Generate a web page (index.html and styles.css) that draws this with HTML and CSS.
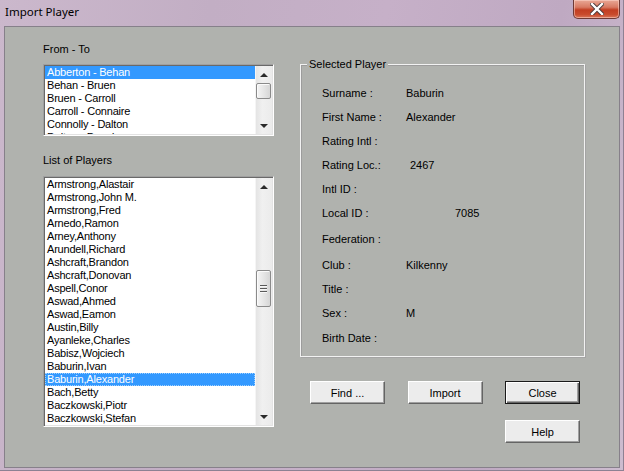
FILE: index.html
```html
<!DOCTYPE html>
<html>
<head>
<meta charset="utf-8">
<link rel="stylesheet" href="styles.css">
</head>
<body>
<div class="window">
  <div class="titlebar">
    <span class="title">Import Player</span>
    <span class="close-btn">
      <svg width="14" height="12" viewBox="0 0 14 12"><path d="M2 1 L12 11 M12 1 L2 11" stroke="#4a3a3a" stroke-width="4.2" stroke-linecap="square"/><path d="M2 1 L12 11 M12 1 L2 11" stroke="#ffffff" stroke-width="2.4" stroke-linecap="square"/></svg>
    </span>
  </div>
  <div class="client">
    <div class="left">
      <div class="label">From - To</div>
      <div class="listbox lb-range">
        <ul class="items">
          <li class="sel">Abberton - Behan</li>
          <li>Behan - Bruen</li>
          <li>Bruen - Carroll</li>
          <li>Carroll - Connaire</li>
          <li>Connolly - Dalton</li>
          <li>Dalton - Dowd</li>
        </ul>
        <div class="scrollbar">
          <div class="sb-btn"><span class="arrow up"></span></div>
          <div class="sb-track"><div class="thumb thumb-range"></div></div>
          <div class="sb-btn"><span class="arrow down"></span></div>
        </div>
      </div>
      <div class="label label-players">List of Players</div>
      <div class="listbox lb-players">
        <ul class="items">
          <li>Armstrong,Alastair</li>
          <li>Armstrong,John M.</li>
          <li>Armstrong,Fred</li>
          <li>Arnedo,Ramon</li>
          <li>Arney,Anthony</li>
          <li>Arundell,Richard</li>
          <li>Ashcraft,Brandon</li>
          <li>Ashcraft,Donovan</li>
          <li>Aspell,Conor</li>
          <li>Aswad,Ahmed</li>
          <li>Aswad,Eamon</li>
          <li>Austin,Billy</li>
          <li>Ayanleke,Charles</li>
          <li>Babisz,Wojciech</li>
          <li>Baburin,Ivan</li>
          <li class="sel focus">Baburin,Alexander</li>
          <li>Bach,Betty</li>
          <li>Baczkowski,Piotr</li>
          <li>Baczkowski,Stefan</li>
        </ul>
        <div class="scrollbar">
          <div class="sb-btn"><span class="arrow up"></span></div>
          <div class="sb-track"><div class="thumb thumb-players"><span class="grip"></span><span class="grip"></span><span class="grip"></span></div></div>
          <div class="sb-btn"><span class="arrow down"></span></div>
        </div>
      </div>
    </div>
    <div class="right">
      <div class="group">
        <span class="legend">Selected Player</span>
        <div class="fields">
          <div class="row"><span class="k">Surname :</span><span class="v">Baburin</span></div>
          <div class="row"><span class="k">First Name :</span><span class="v">Alexander</span></div>
          <div class="row"><span class="k">Rating Intl :</span><span class="v"></span></div>
          <div class="row"><span class="k">Rating Loc.:</span><span class="v ind-4">2467</span></div>
          <div class="row"><span class="k">Intl ID :</span><span class="v"></span></div>
          <div class="row"><span class="k">Local ID :</span><span class="v ind-49">7085</span></div>
          <div class="row mt2"><span class="k">Federation :</span><span class="v"></span></div>
          <div class="row mt2"><span class="k">Club :</span><span class="v">Kilkenny</span></div>
          <div class="row"><span class="k">Title :</span><span class="v"></span></div>
          <div class="row"><span class="k">Sex :</span><span class="v">M</span></div>
          <div class="row mt1"><span class="k">Birth Date :</span><span class="v"></span></div>
        </div>
      </div>
      <div class="buttons">
        <button class="btn">Find ...</button>
        <button class="btn">Import</button>
        <button class="btn default">Close</button>
      </div>
      <div class="buttons help-row">
        <button class="btn">Help</button>
      </div>
    </div>
  </div>
</div>
</body>
</html>
```

FILE: styles.css
```css
* { box-sizing: border-box; }
html, body { margin: 0; padding: 0; }
body {
  width: 624px;
  height: 471px;
  overflow: hidden;
  background: #c4b0c6;
  font-family: "Liberation Sans", Arial, sans-serif;
  font-size: 11px;
  color: #000;
}
.window {
  width: 624px;
  height: 471px;
  display: flex;
  flex-direction: column;
  background: linear-gradient(100deg, #cbb8cc 0%, #c2aec4 30%, #c6b0c8 55%, #bfa9c2 80%, #cdbccf 100%);
  border-right: 1px solid #8e8193;
  border-bottom: 1px solid #8e8193;
}
.titlebar {
  height: 26px;
  flex: none;
  display: flex;
  justify-content: space-between;
  align-items: flex-start;
}
.title {
  font-family: "Noto Sans", sans-serif;
  font-size: 11.5px;
  line-height: 14px;
  padding: 5px 0 0 5px;
  color: #000;
}
.close-btn {
  width: 47px;
  height: 19px;
  margin-right: 3px;
  border: 1px solid #6e3a36;
  border-top: none;
  border-radius: 0 0 5px 5px;
  background: linear-gradient(#e9a896 0%, #d87a63 40%, #c23e22 55%, #c84a2c 80%, #d9765a 100%);
  box-shadow: inset 0 0 0 1px rgba(255,220,210,0.5);
  display: flex;
  align-items: center;
  justify-content: center;
}
.client {
  height: 442px;
  margin: 0 3px 0 4px;
  background: #b0b2ae;
  border: 1px solid #86808a;
  display: flex;
  padding: 16px 0 0 38px;
}
.left {
  width: 231px;
  display: flex;
  flex-direction: column;
}
.label {
  line-height: 13px;
  height: 13px;
}
.label-players { margin-top: 18px; }
.listbox {
  display: flex;
  background: #fff;
  border: 1px solid;
  border-color: #a0a0a0 #fff #fff #a0a0a0;
  box-shadow: inset 1px 1px 0 #696969, inset -1px -1px 0 #e3e3e3;
  padding: 1px 1px 1px 1px;
}
.lb-range { margin-top: 8px; height: 72px; }
.lb-players { margin-top: 9px; height: 251px; }
.items {
  list-style: none;
  margin: 0;
  padding: 0;
  flex: 1;
  overflow: hidden;
}
.items li {
  height: 13px;
  line-height: 13px;
  padding-left: 2px;
  white-space: nowrap;
  letter-spacing: -0.2px;
}
.items li.sel {
  background: #3399ff;
  color: #fff;
}
.items li.focus {
  outline: 1px dotted #9fd0ff;
  outline-offset: -1px;
}
.scrollbar {
  width: 17px;
  flex: none;
  display: flex;
  flex-direction: column;
  background: linear-gradient(90deg, #e4e4e4, #f0f0f0 40%, #ebebeb);
  border-left: 1px solid #f5f5f5;
}
.sb-btn {
  height: 17px;
  flex: none;
  display: flex;
  align-items: center;
  justify-content: center;
}
.sb-track { flex: 1; }
.arrow {
  width: 0;
  height: 0;
  border-left: 4px solid transparent;
  border-right: 4px solid transparent;
}
.arrow.up { border-bottom: 4px solid #2a2a2a; }
.arrow.down { border-top: 4px solid #2a2a2a; }
.thumb {
  width: 15px;
  margin-left: 0;
  border: 1px solid #8a8a8a;
  border-radius: 2px;
  background: linear-gradient(90deg, #f4f4f4, #e6e6e6 50%, #d6d6d6);
  box-shadow: inset 1px 1px 0 #fbfbfb;
  display: flex;
  flex-direction: column;
  align-items: center;
  justify-content: center;
  gap: 1px;
}
.thumb-range { height: 16px; margin-top: 0; }
.thumb-players { height: 37px; margin-top: 75px; }
.grip {
  width: 7px;
  height: 2px;
  border-top: 1px solid #5a5a5a;
  border-bottom: 1px solid #f8f8f8;
}
.right {
  width: 285px;
  margin-left: 26px;
  display: flex;
  flex-direction: column;
}
.group {
  position: relative;
  margin-top: 21px;
  height: 293px;
  border: 1px solid #f2f2f2;
  box-shadow: inset 1px 1px 0 #9c9c9c, 1px 1px 0 #a4a4a4;
  padding: 16px 0 0 21px;
}
.legend {
  position: absolute;
  top: -7px;
  left: 6px;
  padding: 0 2px;
  background: #b0b2ae;
  line-height: 13px;
}
.row {
  display: grid;
  grid-template-columns: 84px 1fr;
  height: 24px;
  line-height: 24px;
}
.row.mt2 { margin-top: 2px; }
.row.mt1 { margin-top: 1px; }
.v.ind-4 { padding-left: 4px; }
.v.ind-49 { padding-left: 49px; }
.buttons {
  display: flex;
  justify-content: space-between;
  padding: 0 5px 0 10px;
  margin-top: 24px;
}
.help-row {
  justify-content: flex-end;
  margin-top: 16px;
}
.btn {
  width: 75px;
  height: 23px;
  font-family: "Liberation Sans", Arial, sans-serif;
  font-size: 11px;
  color: #000;
  background: #ececec;
  border: 1px solid;
  border-color: #ffffff #646464 #646464 #ffffff;
  box-shadow: inset -1px -1px 0 #a0a0a0;
  padding: 0;
  margin: 0;
}
.btn.default {
  border: 1px solid #1a1a1a;
  box-shadow: inset 1px 1px 0 #fff, inset -1px -1px 0 #646464, inset -2px -2px 0 #a0a0a0;
}
```
